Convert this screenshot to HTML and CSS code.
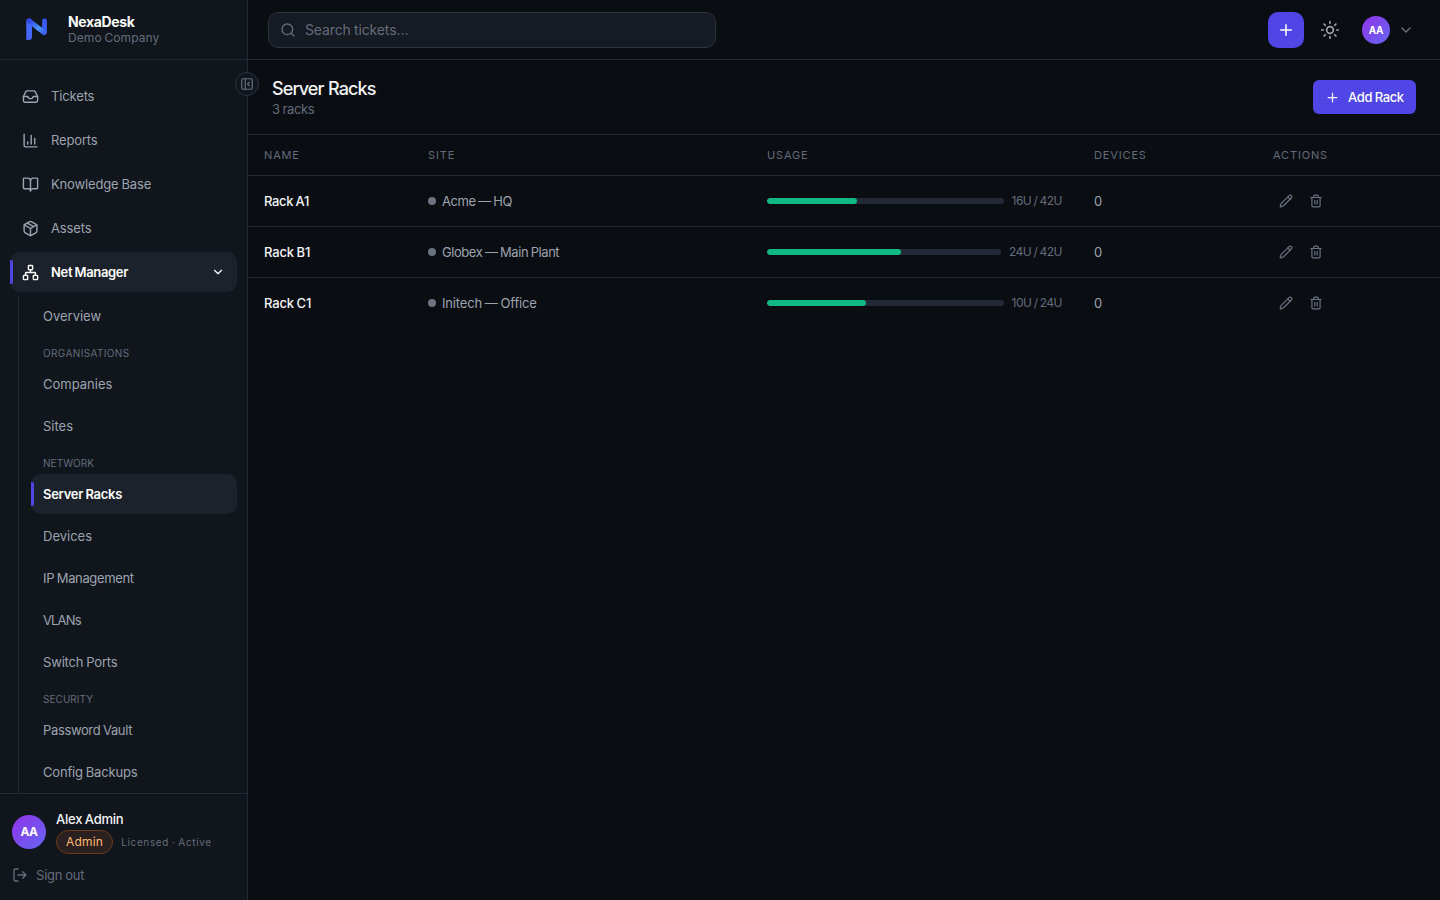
FILE: index.html
```html
<!DOCTYPE html>
<html lang="en">
<head>
<meta charset="utf-8">
<title>NexaDesk – Server Racks</title>
<link rel="stylesheet" href="styles.css">
</head>
<body>
<svg class="defs" width="0" height="0" aria-hidden="true">
  <symbol id="i-pencil" viewBox="0 0 24 24"><path d="M21.174 6.812a1 1 0 0 0-3.986-3.987L3.842 16.174a2 2 0 0 0-.5.83l-1.321 4.352a.5.5 0 0 0 .623.622l4.353-1.32a2 2 0 0 0 .83-.497z"/><path d="m15 5 4 4"/></symbol>
  <symbol id="i-trash" viewBox="0 0 24 24"><path d="M3 6h18"/><path d="M19 6v14c0 1-1 2-2 2H7c-1 0-2-1-2-2V6"/><path d="M8 6V4c0-1 1-2 2-2h4c1 0 2 1 2 2v2"/><path d="M10 11v6M14 11v6"/></symbol>
  <symbol id="i-down" viewBox="0 0 24 24"><path d="m6 9 6 6 6-6"/></symbol>
  <symbol id="i-plus" viewBox="0 0 24 24"><path d="M5 12h14M12 5v14"/></symbol>
</svg>
<div class="app">
  <aside class="sidebar">
    <header class="brand">
      <svg class="logo" width="48" height="48" viewBox="0 0 48 48" fill="none">
        <defs><linearGradient id="lg" x1="0" y1="0" x2="1" y2="1"><stop offset="0" stop-color="#3046e6"/><stop offset="0.650" stop-color="#4a95ff"/><stop offset="1" stop-color="#3b62f6"/></linearGradient></defs>
        <path d="M14.300 17.500q0-3 2.900-3t2.800 3v15.500q0 3-3 3h-2.700z" fill="#4468ff"/>
        <path d="M32.500 16.800v11.500" stroke="#3b5cf4" stroke-width="4.800" stroke-linecap="round"/>
        <path d="M17.200 17 32 28.500" stroke="url(#lg)" stroke-width="5" stroke-linecap="round"/>
      </svg>
      <div class="brand-text">
        <div class="brand-name"><span>NexaDesk</span></div>
        <div class="brand-sub"><span>Demo Company</span></div>
      </div>
    </header>
    <button class="collapse"><svg class="ic" width="14" height="14" viewBox="0 0 24 24"><rect x="3" y="3" width="18" height="18" rx="2"/><path d="M9 3v18M16 15l-3-3 3-3"/></svg></button>
    <nav class="nav">
      <a class="item"><svg class="ic" width="17" height="17" viewBox="0 0 24 24"><path d="M22 12h-6l-2 3h-4l-2-3H2"/><path d="M5.450 5.110 2 12v6a2 2 0 0 0 2 2h16a2 2 0 0 0 2-2v-6l-3.450-6.890A2 2 0 0 0 16.760 4H7.240a2 2 0 0 0-1.790 1.110z"/></svg><span>Tickets</span></a>
      <a class="item"><svg class="ic" width="17" height="17" viewBox="0 0 24 24"><path d="M3 3v16a2 2 0 0 0 2 2h16M18 17V9M13 17V5M8 17v-3"/></svg><span>Reports</span></a>
      <a class="item"><svg class="ic" width="17" height="17" viewBox="0 0 24 24"><path d="M12 7v14"/><path d="M3 18a1 1 0 0 1-1-1V4a1 1 0 0 1 1-1h5a4 4 0 0 1 4 4 4 4 0 0 1 4-4h5a1 1 0 0 1 1 1v13a1 1 0 0 1-1 1h-6a3 3 0 0 0-3 3 3 3 0 0 0-3-3z"/></svg><span>Knowledge Base</span></a>
      <a class="item"><svg class="ic" width="17" height="17" viewBox="0 0 24 24"><path d="M11 21.730a2 2 0 0 0 2 0l7-4A2 2 0 0 0 21 16V8a2 2 0 0 0-1-1.730l-7-4a2 2 0 0 0-2 0l-7 4A2 2 0 0 0 3 8v8a2 2 0 0 0 1 1.730z"/><path d="M12 22V12M3.290 7 12 12l8.710-5M7.500 4.270l9 5.150"/></svg><span>Assets</span></a>
      <a class="item active"><svg class="ic" width="17" height="17" viewBox="0 0 24 24"><rect x="16" y="16" width="6" height="6" rx="1"/><rect x="2" y="16" width="6" height="6" rx="1"/><rect x="9" y="2" width="6" height="6" rx="1"/><path d="M5 16v-3a1 1 0 0 1 1-1h12a1 1 0 0 1 1 1v3M12 12V8"/></svg><span>Net Manager</span><svg class="ic chev" width="14" height="14"><use href="#i-down"/></svg></a>
      <div class="sub">
        <a class="subitem"><span>Overview</span></a>
        <div class="group wide"><span>ORGANISATIONS</span></div>
        <a class="subitem"><span>Companies</span></a>
        <a class="subitem"><span>Sites</span></a>
        <div class="group"><span>NETWORK</span></div>
        <a class="subitem active"><span>Server Racks</span></a>
        <a class="subitem"><span>Devices</span></a>
        <a class="subitem tight"><span>IP Management</span></a>
        <a class="subitem tighter"><span>VLANs</span></a>
        <a class="subitem snug"><span>Switch Ports</span></a>
        <div class="group"><span>SECURITY</span></div>
        <a class="subitem tight"><span>Password Vault</span></a>
        <a class="subitem snug"><span>Config Backups</span></a>
      </div>
    </nav>
    <footer class="user">
      <div class="user-row">
        <div class="avatar">AA</div>
        <div>
          <div class="user-name"><span>Alex Admin</span></div>
          <div class="user-meta"><span class="badge">Admin</span><span class="license">Licensed · Active</span></div>
        </div>
      </div>
      <a class="signout"><svg class="ic" width="16" height="16" viewBox="0 0 24 24"><path d="M9 21H5a2 2 0 0 1-2-2V5a2 2 0 0 1 2-2h4M16 17l5-5-5-5M21 12H9"/></svg><span>Sign out</span></a>
    </footer>
  </aside>
  <main class="main">
    <div class="topbar">
      <label class="search"><svg class="ic" width="16" height="16" viewBox="0 0 24 24"><circle cx="11" cy="11" r="8"/><path d="m21 21-4.300-4.300"/></svg><span>Search tickets…</span></label>
      <div class="tools">
        <button class="new"><svg class="ic" width="18" height="18"><use href="#i-plus"/></svg></button>
        <button class="theme"><svg class="ic" width="20" height="20" viewBox="0 0 24 24"><circle cx="12" cy="12" r="4"/><path d="M12 2v2M12 20v2M4.930 4.930l1.410 1.410M17.660 17.660l1.410 1.410M2 12h2M20 12h2M6.340 17.660l-1.410 1.410M19.070 4.930l-1.410 1.410"/></svg></button>
        <div class="avatar small">AA</div>
        <svg class="ic more" width="16" height="16"><use href="#i-down"/></svg>
      </div>
    </div>
    <div class="pagehead">
      <div>
        <h1><span>Server Racks</span></h1>
        <p><span>3 racks</span></p>
      </div>
      <button class="add"><svg class="ic" width="15" height="15"><use href="#i-plus"/></svg><span>Add Rack</span></button>
    </div>
    <div class="row head"><span>NAME</span><span>SITE</span><span>USAGE</span><span>DEVICES</span><span>ACTIONS</span></div>
    <div class="row">
      <div class="name tight"><span>Rack A1</span></div>
      <div class="site tight"><i class="dot"></i><span>Acme — HQ</span></div>
      <div class="usage"><div class="track"><div class="fill" style="width:38.100%"></div></div><span>16U / 42U</span></div>
      <div class="dev">0</div>
      <div class="acts"><svg class="ic" width="14" height="14"><use href="#i-pencil"/></svg><svg class="ic" width="14" height="14"><use href="#i-trash"/></svg></div>
    </div>
    <div class="row">
      <div class="name snug"><span>Rack B1</span></div>
      <div class="site tight"><i class="dot"></i><span>Globex — Main Plant</span></div>
      <div class="usage"><div class="track"><div class="fill" style="width:57.140%"></div></div><span>24U / 42U</span></div>
      <div class="dev">0</div>
      <div class="acts"><svg class="ic" width="14" height="14"><use href="#i-pencil"/></svg><svg class="ic" width="14" height="14"><use href="#i-trash"/></svg></div>
    </div>
    <div class="row last">
      <div class="name snug"><span>Rack C1</span></div>
      <div class="site snug"><i class="dot"></i><span>Initech — Office</span></div>
      <div class="usage"><div class="track"><div class="fill" style="width:41.670%"></div></div><span>10U / 24U</span></div>
      <div class="dev">0</div>
      <div class="acts"><svg class="ic" width="14" height="14"><use href="#i-pencil"/></svg><svg class="ic" width="14" height="14"><use href="#i-trash"/></svg></div>
    </div>
  </main>
</div>
</body>
</html>
```
FILE: styles.css
```css
* { box-sizing: border-box; }
body { margin: 0; background: #0a0d12; color: #f3f4f6; font: 13px/20px Inter, "Liberation Sans", sans-serif; word-spacing: -0.600px; }
button { border: 0; padding: 0; margin: 0; font: inherit; color: inherit; background: none; word-spacing: inherit; }
span { white-space: nowrap; }
.defs { position: absolute; }
.ic { display: block; flex: none; fill: none; stroke: currentColor; stroke-width: 2; stroke-linecap: round; stroke-linejoin: round; }
.app { display: flex; height: 900px; overflow: hidden; }

.sidebar { position: relative; width: 248px; flex: none; display: flex; flex-direction: column; background: #11151c; border-right: 1px solid #232936; }
.brand { height: 60px; flex: none; display: flex; align-items: center; gap: 8px; padding-left: 12px; border-bottom: 1px solid #232936; }
.logo { margin-top: -3px; }
.brand-name { font-size: 14px; font-weight: 700; line-height: 17px; color: #fff; letter-spacing: -0.350px; }
.brand-sub { font-size: 12px; line-height: 16px; color: #646c7b; letter-spacing: 0.070px; }
.collapse { position: absolute; z-index: 2; left: 235px; top: 72px; width: 24px; height: 24px; display: flex; align-items: center; justify-content: center; border: 1px solid #2a3240; border-radius: 50%; background: #11151c; color: #6b7280; }
.nav { flex: 1; min-height: 0; overflow: hidden; padding: 16px 10px 0; display: flex; flex-direction: column; gap: 4px; }
.item { position: relative; flex: none; height: 40px; display: flex; align-items: center; gap: 12px; padding: 0 12px 1px; border-radius: 10px; color: #9ca3af; letter-spacing: -0.150px; }
.item .ic { margin-top: 1px; }
.active { background: #1c222b; color: #fff; font-weight: 600; letter-spacing: -0.330px; }
.item.active::before, .subitem.active::before { content: ""; position: absolute; left: 0; top: 8px; width: 3px; height: 24px; border-radius: 0 2px 2px 0; background: #4f46e5; }
.item .chev { margin-left: auto; }
.sub { flex: none; margin-left: 8px; padding-left: 12px; border-left: 1px solid #232936; height: 600px; display: flex; flex-direction: column; gap: 2px; }
.subitem { position: relative; flex: none; height: 40px; display: flex; align-items: center; padding: 0 12px 1px; border-radius: 10px; color: #9ca3af; }
.subitem.active { color: #fff; letter-spacing: -0.280px; }
.snug { letter-spacing: -0.170px; }
.tight { letter-spacing: -0.360px; }
.tighter { letter-spacing: -0.850px; }
.group { flex: none; height: 24px; padding: 7px 12px 0; font-size: 10px; line-height: 16px; color: #646c7b; letter-spacing: 0.050px; }
.group.wide { letter-spacing: 0.380px; }
.user { flex: none; height: 107px; padding: 16px 12px 0; border-top: 1px solid #232936; }
.user-row { display: flex; align-items: center; gap: 10px; height: 44px; }
.avatar { width: 34px; height: 34px; flex: none; border-radius: 50%; display: flex; align-items: center; justify-content: center; background: linear-gradient(135deg, #9333ea, #6366f1); color: #fff; font-size: 12px; font-weight: 700; letter-spacing: -0.500px; }
.user-name { line-height: 16px; padding-bottom: 3px; font-weight: 500; letter-spacing: -0.240px; }
.user-meta { display: flex; align-items: center; gap: 8px; }
.badge { height: 24px; padding: 0 9px; border: 1px solid #6b3a18; border-radius: 12px; background: #2b2020; color: #fdba74; font-size: 12px; line-height: 22px; letter-spacing: 0.200px; }
.license { font-size: 10px; color: #646c7b; margin-top: 1px; letter-spacing: 0.650px; }
.signout { display: flex; align-items: center; gap: 8px; margin-top: 11px; color: #646c7b; letter-spacing: -0.210px; }

.main { flex: 1; min-width: 0; }
.topbar { height: 60px; display: flex; align-items: center; justify-content: space-between; padding: 0 26px 0 20px; border-bottom: 1px solid #232936; }
.search { width: 448px; height: 36px; display: flex; align-items: center; gap: 9px; padding: 1px 0 0 11px; border: 1px solid #2b3444; border-radius: 10px; background: #161a22; color: #646c7b; font-size: 14px; letter-spacing: -0.120px; }
.search .ic { margin-top: -1px; }
.tools { display: flex; align-items: center; }
.new { width: 36px; height: 36px; display: flex; align-items: center; justify-content: center; border-radius: 10px; background: #4f46e5; color: #fff; }
.theme { margin-left: 16px; color: #9ca3af; }
.avatar.small { width: 28px; height: 28px; margin-left: 22px; font-size: 10px; letter-spacing: -0.300px; }
.more { margin-left: 8px; color: #6b7280; }
.pagehead { height: 75px; display: flex; align-items: center; justify-content: space-between; padding: 0 24px; border-bottom: 1px solid #232936; }
h1 { margin: 0; padding-top: 1px; font-size: 18px; line-height: 24px; font-weight: 500; letter-spacing: -0.900px; word-spacing: 0.500px; }
p { margin: 0; line-height: 17px; color: #646c7b; letter-spacing: -0.350px; }
.add { height: 34px; width: 103px; display: flex; align-items: center; gap: 8px; padding-left: 12px; border-radius: 6px; background: #4f46e5; color: #fff; font-weight: 500; letter-spacing: -0.350px; }
.row { height: 51px; display: grid; grid-template-columns: 164px 339px 327px 179px 1fr; align-items: center; padding-left: 16px; border-bottom: 1px solid #232936; color: #9ca3af; }
.row.head { height: 41px; font-size: 11px; color: #646c7b; letter-spacing: 0.850px; }
.row.last { border-bottom: 0; height: 50px; }
.name { font-weight: 500; color: #f3f4f6; }
.site { display: flex; align-items: center; gap: 6px; }
.site.tight { letter-spacing: -0.450px; }
.dot { width: 8px; height: 8px; border-radius: 50%; background: #6b7280; }
.usage { display: flex; align-items: center; gap: 8px; padding-right: 32px; font-size: 12px; color: #646c7b; letter-spacing: -0.520px; }
.track { flex: 1; height: 6px; border-radius: 3px; background: #232936; overflow: hidden; }
.fill { height: 6px; border-radius: 3px; background: #10b981; }
.acts { display: flex; gap: 16px; padding-left: 6px; color: #6b7280; }
```
